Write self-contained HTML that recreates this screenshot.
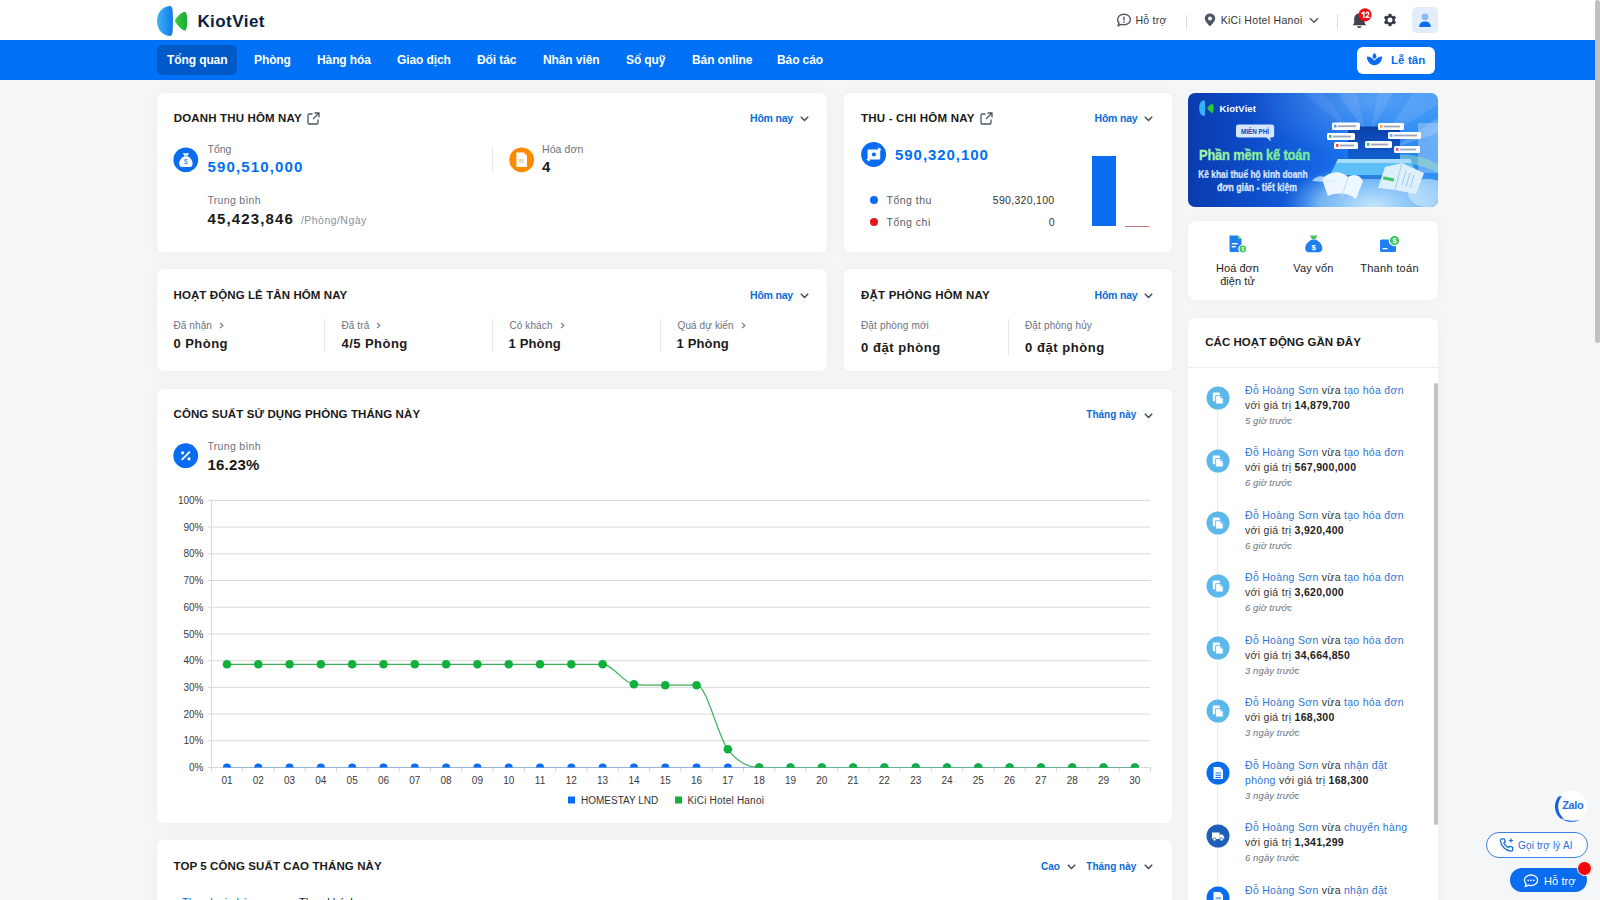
<!DOCTYPE html><html><head><meta charset="utf-8"><style>
html,body{margin:0;padding:0;}
body{width:1600px;height:900px;overflow:hidden;position:relative;background:#f5f6f7;font-family:"Liberation Sans",sans-serif;}
.t{position:absolute;white-space:nowrap;}
.b{position:absolute;}
svg.b{overflow:visible;}
</style></head><body>
<div class="b" style="left:0px;top:0px;width:1600px;height:40px;background:#fff;border-radius:0px;"></div>
<div class="b" style="left:0px;top:40px;width:1600px;height:40px;background:#0070f4;border-radius:0px;"></div>
<svg class="b" style="left:155px;top:4px" width="36" height="34" viewBox="155 4 36 34">
<defs><linearGradient id="lgb" x1="0" x2="1" y1="0" y2="0"><stop offset="0" stop-color="#3cb4f7"/><stop offset="1" stop-color="#1479ea"/></linearGradient>
<linearGradient id="lgg" x1="0" x2="1"><stop offset="0" stop-color="#3ccf3a"/><stop offset="1" stop-color="#17a83a"/></linearGradient></defs>
<path d="M169.8 6 C 171.4 5.9 172.2 7.3 172.5 9.5 C 173.1 16 173.1 26 172.5 32.5 C 172.2 34.8 171.3 36.2 169.6 36.1 C 162 35.2 157 29 157 21 C 157 13.2 162 6.8 169.8 6 Z" fill="url(#lgb)"/>
<path d="M183.5 12 C 185 11.4 186 12.3 186.5 14 C 187.6 18 187.6 24 186.5 28.5 C 186 30.3 185 31 183.5 30.3 C 180.5 28.5 177.5 25.5 175.3 21.8 C 174.8 21 174.8 20.2 175.3 19.5 C 177.5 16.2 180.3 13.6 183.5 12 Z" fill="url(#lgg)"/>
</svg>
<div class="t" style="left:197.4px;top:13.01px;font-size:17px;line-height:17px;font-weight:bold;color:#0a1e42;letter-spacing:0.45px;">KiotViet</div>
<div class="b" style="left:157px;top:45px;width:80px;height:30px;background:#0059c9;border-radius:5px;"></div>
<div class="t" style="left:167px;top:54.04px;font-size:12px;line-height:12px;font-weight:bold;color:#fff;letter-spacing:-0.1px;">Tổng quan</div>
<div class="t" style="left:254px;top:54.04px;font-size:12px;line-height:12px;font-weight:bold;color:#fff;letter-spacing:-0.1px;">Phòng</div>
<div class="t" style="left:317px;top:54.04px;font-size:12px;line-height:12px;font-weight:bold;color:#fff;letter-spacing:-0.1px;">Hàng hóa</div>
<div class="t" style="left:397px;top:54.04px;font-size:12px;line-height:12px;font-weight:bold;color:#fff;letter-spacing:-0.1px;">Giao dịch</div>
<div class="t" style="left:477px;top:54.04px;font-size:12px;line-height:12px;font-weight:bold;color:#fff;letter-spacing:-0.1px;">Đối tác</div>
<div class="t" style="left:543px;top:54.04px;font-size:12px;line-height:12px;font-weight:bold;color:#fff;letter-spacing:-0.1px;">Nhân viên</div>
<div class="t" style="left:626px;top:54.04px;font-size:12px;line-height:12px;font-weight:bold;color:#fff;letter-spacing:-0.1px;">Sổ quỹ</div>
<div class="t" style="left:692px;top:54.04px;font-size:12px;line-height:12px;font-weight:bold;color:#fff;letter-spacing:-0.1px;">Bán online</div>
<div class="t" style="left:777px;top:54.04px;font-size:12px;line-height:12px;font-weight:bold;color:#fff;letter-spacing:-0.1px;">Báo cáo</div>
<svg class="b" style="left:1116px;top:13px" width="16" height="14" viewBox="0 0 16 14">
<path d="M8 1.2 C 4.2 1.2 1.6 3.6 1.6 6.5 C 1.6 7.8 2.1 9 3 9.9 L 2 12.8 L 5.2 11.4 C 6 11.7 7 11.8 8 11.8 C 11.8 11.8 14.4 9.4 14.4 6.5 C 14.4 3.6 11.8 1.2 8 1.2 Z" fill="none" stroke="#4b5563" stroke-width="1.4" stroke-linejoin="round"/>
<rect x="7.3" y="3.6" width="1.4" height="3.8" fill="#4b5563"/><rect x="7.3" y="8.4" width="1.4" height="1.4" fill="#4b5563"/></svg>
<div class="t" style="left:1135.4px;top:14.96px;font-size:10.5px;line-height:10.5px;font-weight:normal;color:#333;letter-spacing:0.25px;">Hỗ trợ</div>
<div class="b" style="left:1186px;top:14.5px;width:1px;height:14px;background:#d9dce1;border-radius:0px;"></div>
<svg class="b" style="left:1204px;top:13px" width="12" height="14" viewBox="0 0 12 14">
<path d="M6 0.6 C 3 0.6 0.8 2.8 0.8 5.6 C 0.8 8.8 6 13.4 6 13.4 C 6 13.4 11.2 8.8 11.2 5.6 C 11.2 2.8 9 0.6 6 0.6 Z" fill="#4a5568"/><circle cx="6" cy="5.4" r="2" fill="#fff"/></svg>
<div class="t" style="left:1220.7px;top:14.96px;font-size:10.5px;line-height:10.5px;font-weight:normal;color:#333;letter-spacing:0.3px;">KiCi Hotel Hanoi</div>
<svg class="b" style="left:1309px;top:17px" width="10" height="7" viewBox="0 0 10 7"><path d="M1 1.2 L5 5.2 L9 1.2" fill="none" stroke="#4b5563" stroke-width="1.4"/></svg>
<div class="b" style="left:1337px;top:14px;width:1px;height:15px;background:#d9dce1;border-radius:0px;"></div>
<svg class="b" style="left:1351px;top:11px" width="18" height="19" viewBox="0 0 18 19">
<path d="M8 2.5 C 4.8 2.5 3.2 5 3.2 8 L 3.2 12 L 1.6 14.3 L 15.2 14.3 L 13.6 12 L 13.6 8 C 13.6 5 11.8 2.5 8 2.5 Z" fill="#3d4451"/>
<path d="M6 15.2 L 10.6 15.2 C 10.3 16.4 9.5 17 8.3 17 C 7.1 17 6.3 16.4 6 15.2 Z" fill="#3d4451"/></svg>
<svg class="b" style="left:1358px;top:7.5px" width="14" height="14" viewBox="0 0 14 14"><circle cx="7" cy="6.8" r="6.6" fill="#ee0f17"/><path d="M3.4 5.1 L5.3 3.6 L6.6 3.6 L6.6 9.9 L5.1 9.9 L5.1 5.5 L3.8 6.4 Z" fill="#fff"/><path d="M7.4 5.7 C7.4 4.4 8.3 3.5 9.5 3.5 C10.7 3.5 11.5 4.3 11.5 5.4 C11.5 6.2 11.1 6.8 10.4 7.5 L9.4 8.5 L11.6 8.5 L11.6 9.9 L7.4 9.9 L7.4 8.8 L9.5 6.7 C9.9 6.3 10 6 10 5.6 C10 5.2 9.8 4.9 9.5 4.9 C9.1 4.9 8.9 5.2 8.9 5.8 Z" fill="#fff"/></svg>
<svg class="b" style="left:1383.1px;top:12.9px" width="14" height="14" viewBox="0 0 14 14"><path d="M5.70 2.48 L5.84 1.01 L8.16 1.01 L8.30 2.48 L10.26 3.62 L11.60 3.00 L12.77 5.01 L11.56 5.86 L11.56 8.14 L12.77 8.99 L11.60 11.00 L10.26 10.38 L8.30 11.52 L8.16 12.99 L5.84 12.99 L5.70 11.52 L3.74 10.38 L2.40 11.00 L1.23 8.99 L2.44 8.14 L2.44 5.86 L1.23 5.01 L2.40 3.00 L3.74 3.62 Z" fill="#2f3540" stroke="#2f3540" stroke-width="0.5" stroke-linejoin="round"/><circle cx="7" cy="7" r="2.5" fill="#fff"/></svg>
<div class="b" style="left:1412px;top:7px;width:26px;height:26px;background:#e3eefd;border-radius:5px;"></div>
<svg class="b" style="left:1412px;top:7px" width="26" height="26" viewBox="0 0 26 26">
<circle cx="13" cy="9.8" r="3.4" fill="#8bb9f7"/><path d="M7.2 20 C 7.2 16.3 9.5 14.5 13 14.5 C 16.5 14.5 18.8 16.3 18.8 20 Z" fill="#0a6cf0"/></svg>
<div class="b" style="left:1357px;top:46.5px;width:78px;height:27px;background:#fff;border-radius:6px;"></div>
<svg class="b" style="left:1366px;top:52px" width="17" height="14" viewBox="0 0 17 14">
<path d="M8.5 0.9 C 10.1 2.3 10.7 3.7 10.3 5.1 C 10 6.1 9.3 6.7 8.5 6.9 C 7.7 6.7 7 6.1 6.7 5.1 C 6.3 3.7 6.9 2.3 8.5 0.9 Z" fill="#0a6cf0"/>
<path d="M0.8 4.6 C 4.2 4.6 7 6.4 8.5 8.7 C 10 6.4 12.8 4.6 16.2 4.6 C 16 9.6 12.7 13.2 8.5 13.2 C 4.3 13.2 1 9.6 0.8 4.6 Z" fill="#0a6cf0"/></svg>
<div class="t" style="left:1391px;top:54.92px;font-size:11.5px;line-height:11.5px;font-weight:bold;color:#0a6cf0;letter-spacing:0.1px;">Lễ tân</div>
<div class="b" style="left:1594.5px;top:0px;width:5.5px;height:343px;background:#c1c1c1;border-radius:3px;"></div>
<div class="b" style="left:157px;top:93px;width:670px;height:159px;background:#fff;border-radius:6px;box-shadow:0 0 18px rgba(20,30,50,0.035);"></div>
<div class="b" style="left:844px;top:93px;width:328px;height:159px;background:#fff;border-radius:6px;box-shadow:0 0 18px rgba(20,30,50,0.035);"></div>
<div class="b" style="left:157px;top:269px;width:670px;height:102px;background:#fff;border-radius:6px;box-shadow:0 0 18px rgba(20,30,50,0.035);"></div>
<div class="b" style="left:844px;top:269px;width:328px;height:102px;background:#fff;border-radius:6px;box-shadow:0 0 18px rgba(20,30,50,0.035);"></div>
<div class="b" style="left:157px;top:388.5px;width:1015px;height:434.5px;background:#fff;border-radius:6px;box-shadow:0 0 18px rgba(20,30,50,0.035);"></div>
<div class="b" style="left:157px;top:840px;width:1015px;height:100px;background:#fff;border-radius:6px;box-shadow:0 0 18px rgba(20,30,50,0.035);"></div>
<div class="t" style="left:173.8px;top:112.92px;font-size:11.5px;line-height:11.5px;font-weight:bold;color:#1a1a1a;letter-spacing:0.15px;">DOANH THU HÔM NAY</div>
<svg class="b" style="left:306.5px;top:111.5px" width="13" height="13" viewBox="0 0 13 13">
<path d="M5.5 2 L2.2 2 C1.5 2 1 2.5 1 3.2 L1 10.8 C1 11.5 1.5 12 2.2 12 L9.8 12 C10.5 12 11 11.5 11 10.8 L11 7.5" fill="none" stroke="#4b5563" stroke-width="1.3"/>
<path d="M7.5 1 L12 1 L12 5.5 M12 1 L6 7" fill="none" stroke="#4b5563" stroke-width="1.3"/></svg>
<div class="t" style="left:750px;top:112.96px;font-size:10.5px;line-height:10.5px;font-weight:bold;color:#0b6bd8;letter-spacing:-0.2px;">Hôm nay</div>
<svg class="b" style="left:799.5px;top:116.3px" width="9" height="6" viewBox="0 0 9 6"><path d="M0.8 0.8 L4.5 4.6 L8.2 0.8" fill="none" stroke="#3f4550" stroke-width="1.4"/></svg>
<svg class="b" style="left:173px;top:147px" width="26" height="26" viewBox="0 0 26 26">
<circle cx="12.8" cy="12.8" r="12.4" fill="#0a6cf0"/>
<path d="M9.6 6.2 L16.2 6.2 L14.4 8.8 L11.4 8.8 Z" fill="#fff"/>
<path d="M11.3 9.3 L14.5 9.3 C 17.5 10.8 19.6 13.6 19.6 16.5 C 19.6 19 18.5 19.9 16.5 19.9 L 9.3 19.9 C 7.3 19.9 6.2 19 6.2 16.5 C 6.2 13.6 8.3 10.8 11.3 9.3 Z" fill="#fff"/>
<text x="12.9" y="17.3" font-size="6.5" font-family="Liberation Sans" fill="#0a6cf0" text-anchor="middle">$</text></svg>
<div class="t" style="left:207.5px;top:143.96px;font-size:10.5px;line-height:10.5px;font-weight:normal;color:#6b7280;">Tổng</div>
<div class="t" style="left:207.5px;top:158.95px;font-size:15px;line-height:15px;font-weight:bold;color:#0070f4;letter-spacing:1.15px;">590,510,000</div>
<div class="b" style="left:491.5px;top:147px;width:1px;height:25px;background:#e5e7eb;border-radius:0px;"></div>
<svg class="b" style="left:509px;top:147px" width="26" height="26" viewBox="0 0 26 26">
<circle cx="12.7" cy="12.8" r="12.4" fill="#ff8a00"/>
<path d="M7.4 5.6 L15 5.6 L18 8.6 L18 20 L7.4 20 Z" fill="#fff"/>
<path d="M15 5.6 L15 8.6 L18 8.6" fill="#ffd9a8"/>
<rect x="10" y="12.5" width="4.6" height="1" fill="#e8a04a"/><rect x="10" y="14.6" width="4.6" height="1" fill="#e8c27a"/></svg>
<div class="t" style="left:542px;top:143.96px;font-size:10.5px;line-height:10.5px;font-weight:normal;color:#6b7280;letter-spacing:0.1px;">Hóa đơn</div>
<div class="t" style="left:542px;top:158.95px;font-size:15px;line-height:15px;font-weight:bold;color:#1a1a1a;">4</div>
<div class="t" style="left:207.5px;top:194.96px;font-size:10.5px;line-height:10.5px;font-weight:normal;color:#6b7280;letter-spacing:0.3px;">Trung bình</div>
<div class="t" style="left:207.5px;top:210.95px;font-size:15px;line-height:15px;font-weight:bold;color:#1a1a1a;letter-spacing:1.15px;">45,423,846</div>
<div class="t" style="left:301px;top:214.96px;font-size:10.5px;line-height:10.5px;font-weight:normal;color:#8b929c;letter-spacing:0.45px;">/Phòng/Ngày</div>
<div class="t" style="left:861px;top:112.92px;font-size:11.5px;line-height:11.5px;font-weight:bold;color:#1a1a1a;letter-spacing:0.2px;">THU - CHI HÔM NAY</div>
<svg class="b" style="left:980px;top:111.5px" width="13" height="13" viewBox="0 0 13 13">
<path d="M5.5 2 L2.2 2 C1.5 2 1 2.5 1 3.2 L1 10.8 C1 11.5 1.5 12 2.2 12 L9.8 12 C10.5 12 11 11.5 11 10.8 L11 7.5" fill="none" stroke="#4b5563" stroke-width="1.3"/>
<path d="M7.5 1 L12 1 L12 5.5 M12 1 L6 7" fill="none" stroke="#4b5563" stroke-width="1.3"/></svg>
<div class="t" style="left:1094.5px;top:112.96px;font-size:10.5px;line-height:10.5px;font-weight:bold;color:#0b6bd8;letter-spacing:-0.2px;">Hôm nay</div>
<svg class="b" style="left:1144px;top:116.3px" width="9" height="6" viewBox="0 0 9 6"><path d="M0.8 0.8 L4.5 4.6 L8.2 0.8" fill="none" stroke="#3f4550" stroke-width="1.4"/></svg>
<svg class="b" style="left:861px;top:142px" width="26" height="26" viewBox="0 0 26 26">
<circle cx="12.6" cy="12.5" r="12.5" fill="#0a6cf0"/>
<rect x="6.6" y="7.6" width="12.6" height="9.8" rx="0.8" fill="#fff"/>
<circle cx="12.9" cy="12.5" r="2.1" fill="#0a6cf0"/>
<path d="M17.2 5.2 L20.4 7.6 L17.2 10 Z" fill="#fff"/><path d="M8.6 15 L5.4 17.4 L8.6 19.8 Z" fill="#fff"/></svg>
<div class="t" style="left:895px;top:146.95px;font-size:15px;line-height:15px;font-weight:bold;color:#0070f4;letter-spacing:0.95px;">590,320,100</div>
<div class="b" style="left:869.5px;top:196px;width:8px;height:8px;border-radius:50%;background:#0a6cf0"></div>
<div class="b" style="left:869.5px;top:218px;width:8px;height:8px;border-radius:50%;background:#e8141c"></div>
<div class="t" style="left:886.5px;top:194.96px;font-size:10.5px;line-height:10.5px;font-weight:normal;color:#555b65;letter-spacing:0.5px;">Tổng thu</div>
<div class="t" style="left:886.5px;top:216.96px;font-size:10.5px;line-height:10.5px;font-weight:normal;color:#555b65;letter-spacing:0.5px;">Tổng chi</div>
<div class="t" style="right:545.5px;top:194.96px;font-size:10.5px;line-height:10.5px;font-weight:normal;color:#333;letter-spacing:0.3px;">590,320,100</div>
<div class="t" style="right:545.5px;top:216.96px;font-size:10.5px;line-height:10.5px;font-weight:normal;color:#333;">0</div>
<div class="b" style="left:1092px;top:156px;width:23.8px;height:70.3px;background:#0a6cf0;border-radius:0px;"></div>
<div class="b" style="left:1125px;top:225.6px;width:24px;height:1.2px;background:#c97b7b;border-radius:0px;"></div>
<div class="t" style="left:173.5px;top:289.92px;font-size:11.5px;line-height:11.5px;font-weight:bold;color:#1a1a1a;letter-spacing:0.1px;">HOẠT ĐỘNG LỄ TÂN HÔM NAY</div>
<div class="t" style="left:750px;top:289.96px;font-size:10.5px;line-height:10.5px;font-weight:bold;color:#0b6bd8;letter-spacing:-0.2px;">Hôm nay</div>
<svg class="b" style="left:799.5px;top:293px" width="9" height="6" viewBox="0 0 9 6"><path d="M0.8 0.8 L4.5 4.6 L8.2 0.8" fill="none" stroke="#3f4550" stroke-width="1.4"/></svg>
<div class="t" style="left:173.5px;top:321.04px;font-size:10px;line-height:10px;font-weight:normal;color:#6b7280;letter-spacing:0.1px;">Đã nhận</div>
<svg class="b" style="left:219.0046875px;top:322px" width="5" height="7" viewBox="0 0 5 7"><path d="M1 0.8 L3.9 3.5 L1 6.2" fill="none" stroke="#6b7280" stroke-width="1.1"/></svg>
<div class="t" style="left:173.5px;top:337.00px;font-size:13px;line-height:13px;font-weight:bold;color:#1a1a1a;letter-spacing:0.45px;">0 Phòng</div>
<div class="t" style="left:341.5px;top:321.04px;font-size:10px;line-height:10px;font-weight:normal;color:#6b7280;letter-spacing:0.1px;">Đã trả</div>
<svg class="b" style="left:376.3296875px;top:322px" width="5" height="7" viewBox="0 0 5 7"><path d="M1 0.8 L3.9 3.5 L1 6.2" fill="none" stroke="#6b7280" stroke-width="1.1"/></svg>
<div class="t" style="left:341.5px;top:337.00px;font-size:13px;line-height:13px;font-weight:bold;color:#1a1a1a;letter-spacing:0.45px;">4/5 Phòng</div>
<div class="b" style="left:323.5px;top:319px;width:1px;height:32.5px;background:#e5e7eb;border-radius:0px;"></div>
<div class="t" style="left:509.5px;top:321.04px;font-size:10px;line-height:10px;font-weight:normal;color:#6b7280;letter-spacing:0.1px;">Có khách</div>
<svg class="b" style="left:559.54375px;top:322px" width="5" height="7" viewBox="0 0 5 7"><path d="M1 0.8 L3.9 3.5 L1 6.2" fill="none" stroke="#6b7280" stroke-width="1.1"/></svg>
<div class="t" style="left:508.5px;top:337.00px;font-size:13px;line-height:13px;font-weight:bold;color:#1a1a1a;letter-spacing:0.15px;">1 Phòng</div>
<div class="b" style="left:491.5px;top:319px;width:1px;height:32.5px;background:#e5e7eb;border-radius:0px;"></div>
<div class="t" style="left:677.5px;top:321.04px;font-size:10px;line-height:10px;font-weight:normal;color:#6b7280;letter-spacing:0.1px;">Quá dự kiến</div>
<svg class="b" style="left:740.6546875px;top:322px" width="5" height="7" viewBox="0 0 5 7"><path d="M1 0.8 L3.9 3.5 L1 6.2" fill="none" stroke="#6b7280" stroke-width="1.1"/></svg>
<div class="t" style="left:676.5px;top:337.00px;font-size:13px;line-height:13px;font-weight:bold;color:#1a1a1a;letter-spacing:0.15px;">1 Phòng</div>
<div class="b" style="left:659.5px;top:319px;width:1px;height:32.5px;background:#e5e7eb;border-radius:0px;"></div>
<div class="t" style="left:861px;top:289.92px;font-size:11.5px;line-height:11.5px;font-weight:bold;color:#1a1a1a;letter-spacing:0.2px;">ĐẶT PHÒNG HÔM NAY</div>
<div class="t" style="left:1094.5px;top:289.96px;font-size:10.5px;line-height:10.5px;font-weight:bold;color:#0b6bd8;letter-spacing:-0.2px;">Hôm nay</div>
<svg class="b" style="left:1144px;top:293px" width="9" height="6" viewBox="0 0 9 6"><path d="M0.8 0.8 L4.5 4.6 L8.2 0.8" fill="none" stroke="#3f4550" stroke-width="1.4"/></svg>
<div class="t" style="left:861px;top:321.04px;font-size:10px;line-height:10px;font-weight:normal;color:#6b7280;letter-spacing:0.15px;">Đặt phòng mới</div>
<div class="t" style="left:1025px;top:321.04px;font-size:10px;line-height:10px;font-weight:normal;color:#6b7280;letter-spacing:0.15px;">Đặt phòng hủy</div>
<div class="t" style="left:861px;top:341.00px;font-size:13px;line-height:13px;font-weight:bold;color:#1a1a1a;letter-spacing:0.55px;">0 đặt phòng</div>
<div class="t" style="left:1025px;top:341.00px;font-size:13px;line-height:13px;font-weight:bold;color:#1a1a1a;letter-spacing:0.55px;">0 đặt phòng</div>
<div class="b" style="left:1007.5px;top:319px;width:1px;height:36px;background:#e5e7eb;border-radius:0px;"></div>
<div class="t" style="left:173.5px;top:408.92px;font-size:11.5px;line-height:11.5px;font-weight:bold;color:#1a1a1a;letter-spacing:0.1px;">CÔNG SUẤT SỬ DỤNG PHÒNG THÁNG NÀY</div>
<div class="t" style="left:1086.3px;top:410.04px;font-size:10px;line-height:10px;font-weight:bold;color:#0b6bd8;">Tháng này</div>
<svg class="b" style="left:1144px;top:412.5px" width="9" height="6" viewBox="0 0 9 6"><path d="M0.8 0.8 L4.5 4.6 L8.2 0.8" fill="none" stroke="#3f4550" stroke-width="1.4"/></svg>
<svg class="b" style="left:173px;top:443px" width="26" height="26" viewBox="0 0 26 26">
<circle cx="12.7" cy="12.7" r="12.4" fill="#0a6cf0"/>
<path d="M9.2 16.4 L16.4 9.2" stroke="#fff" stroke-width="1.8" stroke-linecap="round"/>
<circle cx="9.6" cy="9.8" r="1.6" fill="#fff"/><circle cx="16" cy="15.8" r="1.6" fill="#fff"/></svg>
<div class="t" style="left:207.5px;top:440.96px;font-size:10.5px;line-height:10.5px;font-weight:normal;color:#6b7280;letter-spacing:0.3px;">Trung bình</div>
<div class="t" style="left:207.5px;top:456.95px;font-size:15px;line-height:15px;font-weight:bold;color:#1a1a1a;letter-spacing:0.2px;">16.23%</div>
<svg class="b" style="left:0;top:0" width="1600" height="900" viewBox="0 0 1600 900">
<defs><clipPath id="plot"><rect x="211.3" y="490.5" width="939.2" height="277.0"/></clipPath></defs>
<line x1="207.8" y1="767.50" x2="1150.5" y2="767.50" stroke="#d9d9d9" stroke-width="1"/>
<text x="203.5" y="771.10" font-size="10" font-family="Liberation Sans" fill="#3a3a3a" text-anchor="end" letter-spacing="0">0%</text>
<line x1="207.8" y1="740.79" x2="1150.5" y2="740.79" stroke="#d9d9d9" stroke-width="1"/>
<text x="203.5" y="744.39" font-size="10" font-family="Liberation Sans" fill="#3a3a3a" text-anchor="end" letter-spacing="0">10%</text>
<line x1="207.8" y1="714.08" x2="1150.5" y2="714.08" stroke="#d9d9d9" stroke-width="1"/>
<text x="203.5" y="717.68" font-size="10" font-family="Liberation Sans" fill="#3a3a3a" text-anchor="end" letter-spacing="0">20%</text>
<line x1="207.8" y1="687.37" x2="1150.5" y2="687.37" stroke="#d9d9d9" stroke-width="1"/>
<text x="203.5" y="690.97" font-size="10" font-family="Liberation Sans" fill="#3a3a3a" text-anchor="end" letter-spacing="0">30%</text>
<line x1="207.8" y1="660.66" x2="1150.5" y2="660.66" stroke="#d9d9d9" stroke-width="1"/>
<text x="203.5" y="664.26" font-size="10" font-family="Liberation Sans" fill="#3a3a3a" text-anchor="end" letter-spacing="0">40%</text>
<line x1="207.8" y1="633.95" x2="1150.5" y2="633.95" stroke="#d9d9d9" stroke-width="1"/>
<text x="203.5" y="637.55" font-size="10" font-family="Liberation Sans" fill="#3a3a3a" text-anchor="end" letter-spacing="0">50%</text>
<line x1="207.8" y1="607.24" x2="1150.5" y2="607.24" stroke="#d9d9d9" stroke-width="1"/>
<text x="203.5" y="610.84" font-size="10" font-family="Liberation Sans" fill="#3a3a3a" text-anchor="end" letter-spacing="0">60%</text>
<line x1="207.8" y1="580.53" x2="1150.5" y2="580.53" stroke="#d9d9d9" stroke-width="1"/>
<text x="203.5" y="584.13" font-size="10" font-family="Liberation Sans" fill="#3a3a3a" text-anchor="end" letter-spacing="0">70%</text>
<line x1="207.8" y1="553.82" x2="1150.5" y2="553.82" stroke="#d9d9d9" stroke-width="1"/>
<text x="203.5" y="557.42" font-size="10" font-family="Liberation Sans" fill="#3a3a3a" text-anchor="end" letter-spacing="0">80%</text>
<line x1="207.8" y1="527.11" x2="1150.5" y2="527.11" stroke="#d9d9d9" stroke-width="1"/>
<text x="203.5" y="530.71" font-size="10" font-family="Liberation Sans" fill="#3a3a3a" text-anchor="end" letter-spacing="0">90%</text>
<line x1="207.8" y1="500.40" x2="1150.5" y2="500.40" stroke="#d9d9d9" stroke-width="1"/>
<text x="203.5" y="504.00" font-size="10" font-family="Liberation Sans" fill="#3a3a3a" text-anchor="end" letter-spacing="0">100%</text>
<line x1="211.5" y1="500.5" x2="211.5" y2="771.5" stroke="#d9d9d9" stroke-width="1"/>
<line x1="242.61" y1="767.5" x2="242.61" y2="771.5" stroke="#d4d4d4" stroke-width="1"/>
<line x1="273.91" y1="767.5" x2="273.91" y2="771.5" stroke="#d4d4d4" stroke-width="1"/>
<line x1="305.22" y1="767.5" x2="305.22" y2="771.5" stroke="#d4d4d4" stroke-width="1"/>
<line x1="336.53" y1="767.5" x2="336.53" y2="771.5" stroke="#d4d4d4" stroke-width="1"/>
<line x1="367.83" y1="767.5" x2="367.83" y2="771.5" stroke="#d4d4d4" stroke-width="1"/>
<line x1="399.14" y1="767.5" x2="399.14" y2="771.5" stroke="#d4d4d4" stroke-width="1"/>
<line x1="430.45" y1="767.5" x2="430.45" y2="771.5" stroke="#d4d4d4" stroke-width="1"/>
<line x1="461.75" y1="767.5" x2="461.75" y2="771.5" stroke="#d4d4d4" stroke-width="1"/>
<line x1="493.06" y1="767.5" x2="493.06" y2="771.5" stroke="#d4d4d4" stroke-width="1"/>
<line x1="524.37" y1="767.5" x2="524.37" y2="771.5" stroke="#d4d4d4" stroke-width="1"/>
<line x1="555.67" y1="767.5" x2="555.67" y2="771.5" stroke="#d4d4d4" stroke-width="1"/>
<line x1="586.98" y1="767.5" x2="586.98" y2="771.5" stroke="#d4d4d4" stroke-width="1"/>
<line x1="618.29" y1="767.5" x2="618.29" y2="771.5" stroke="#d4d4d4" stroke-width="1"/>
<line x1="649.59" y1="767.5" x2="649.59" y2="771.5" stroke="#d4d4d4" stroke-width="1"/>
<line x1="680.90" y1="767.5" x2="680.90" y2="771.5" stroke="#d4d4d4" stroke-width="1"/>
<line x1="712.21" y1="767.5" x2="712.21" y2="771.5" stroke="#d4d4d4" stroke-width="1"/>
<line x1="743.51" y1="767.5" x2="743.51" y2="771.5" stroke="#d4d4d4" stroke-width="1"/>
<line x1="774.82" y1="767.5" x2="774.82" y2="771.5" stroke="#d4d4d4" stroke-width="1"/>
<line x1="806.13" y1="767.5" x2="806.13" y2="771.5" stroke="#d4d4d4" stroke-width="1"/>
<line x1="837.43" y1="767.5" x2="837.43" y2="771.5" stroke="#d4d4d4" stroke-width="1"/>
<line x1="868.74" y1="767.5" x2="868.74" y2="771.5" stroke="#d4d4d4" stroke-width="1"/>
<line x1="900.05" y1="767.5" x2="900.05" y2="771.5" stroke="#d4d4d4" stroke-width="1"/>
<line x1="931.35" y1="767.5" x2="931.35" y2="771.5" stroke="#d4d4d4" stroke-width="1"/>
<line x1="962.66" y1="767.5" x2="962.66" y2="771.5" stroke="#d4d4d4" stroke-width="1"/>
<line x1="993.97" y1="767.5" x2="993.97" y2="771.5" stroke="#d4d4d4" stroke-width="1"/>
<line x1="1025.27" y1="767.5" x2="1025.27" y2="771.5" stroke="#d4d4d4" stroke-width="1"/>
<line x1="1056.58" y1="767.5" x2="1056.58" y2="771.5" stroke="#d4d4d4" stroke-width="1"/>
<line x1="1087.89" y1="767.5" x2="1087.89" y2="771.5" stroke="#d4d4d4" stroke-width="1"/>
<line x1="1119.19" y1="767.5" x2="1119.19" y2="771.5" stroke="#d4d4d4" stroke-width="1"/>
<line x1="1150.50" y1="767.5" x2="1150.50" y2="771.5" stroke="#d4d4d4" stroke-width="1"/>
<text x="226.95" y="784.2" font-size="10" font-family="Liberation Sans" fill="#3a3a3a" text-anchor="middle" letter-spacing="0">01</text>
<text x="258.26" y="784.2" font-size="10" font-family="Liberation Sans" fill="#3a3a3a" text-anchor="middle" letter-spacing="0">02</text>
<text x="289.57" y="784.2" font-size="10" font-family="Liberation Sans" fill="#3a3a3a" text-anchor="middle" letter-spacing="0">03</text>
<text x="320.87" y="784.2" font-size="10" font-family="Liberation Sans" fill="#3a3a3a" text-anchor="middle" letter-spacing="0">04</text>
<text x="352.18" y="784.2" font-size="10" font-family="Liberation Sans" fill="#3a3a3a" text-anchor="middle" letter-spacing="0">05</text>
<text x="383.49" y="784.2" font-size="10" font-family="Liberation Sans" fill="#3a3a3a" text-anchor="middle" letter-spacing="0">06</text>
<text x="414.79" y="784.2" font-size="10" font-family="Liberation Sans" fill="#3a3a3a" text-anchor="middle" letter-spacing="0">07</text>
<text x="446.10" y="784.2" font-size="10" font-family="Liberation Sans" fill="#3a3a3a" text-anchor="middle" letter-spacing="0">08</text>
<text x="477.41" y="784.2" font-size="10" font-family="Liberation Sans" fill="#3a3a3a" text-anchor="middle" letter-spacing="0">09</text>
<text x="508.71" y="784.2" font-size="10" font-family="Liberation Sans" fill="#3a3a3a" text-anchor="middle" letter-spacing="0">10</text>
<text x="540.02" y="784.2" font-size="10" font-family="Liberation Sans" fill="#3a3a3a" text-anchor="middle" letter-spacing="0">11</text>
<text x="571.33" y="784.2" font-size="10" font-family="Liberation Sans" fill="#3a3a3a" text-anchor="middle" letter-spacing="0">12</text>
<text x="602.63" y="784.2" font-size="10" font-family="Liberation Sans" fill="#3a3a3a" text-anchor="middle" letter-spacing="0">13</text>
<text x="633.94" y="784.2" font-size="10" font-family="Liberation Sans" fill="#3a3a3a" text-anchor="middle" letter-spacing="0">14</text>
<text x="665.25" y="784.2" font-size="10" font-family="Liberation Sans" fill="#3a3a3a" text-anchor="middle" letter-spacing="0">15</text>
<text x="696.55" y="784.2" font-size="10" font-family="Liberation Sans" fill="#3a3a3a" text-anchor="middle" letter-spacing="0">16</text>
<text x="727.86" y="784.2" font-size="10" font-family="Liberation Sans" fill="#3a3a3a" text-anchor="middle" letter-spacing="0">17</text>
<text x="759.17" y="784.2" font-size="10" font-family="Liberation Sans" fill="#3a3a3a" text-anchor="middle" letter-spacing="0">18</text>
<text x="790.47" y="784.2" font-size="10" font-family="Liberation Sans" fill="#3a3a3a" text-anchor="middle" letter-spacing="0">19</text>
<text x="821.78" y="784.2" font-size="10" font-family="Liberation Sans" fill="#3a3a3a" text-anchor="middle" letter-spacing="0">20</text>
<text x="853.09" y="784.2" font-size="10" font-family="Liberation Sans" fill="#3a3a3a" text-anchor="middle" letter-spacing="0">21</text>
<text x="884.39" y="784.2" font-size="10" font-family="Liberation Sans" fill="#3a3a3a" text-anchor="middle" letter-spacing="0">22</text>
<text x="915.70" y="784.2" font-size="10" font-family="Liberation Sans" fill="#3a3a3a" text-anchor="middle" letter-spacing="0">23</text>
<text x="947.01" y="784.2" font-size="10" font-family="Liberation Sans" fill="#3a3a3a" text-anchor="middle" letter-spacing="0">24</text>
<text x="978.31" y="784.2" font-size="10" font-family="Liberation Sans" fill="#3a3a3a" text-anchor="middle" letter-spacing="0">25</text>
<text x="1009.62" y="784.2" font-size="10" font-family="Liberation Sans" fill="#3a3a3a" text-anchor="middle" letter-spacing="0">26</text>
<text x="1040.93" y="784.2" font-size="10" font-family="Liberation Sans" fill="#3a3a3a" text-anchor="middle" letter-spacing="0">27</text>
<text x="1072.23" y="784.2" font-size="10" font-family="Liberation Sans" fill="#3a3a3a" text-anchor="middle" letter-spacing="0">28</text>
<text x="1103.54" y="784.2" font-size="10" font-family="Liberation Sans" fill="#3a3a3a" text-anchor="middle" letter-spacing="0">29</text>
<text x="1134.85" y="784.2" font-size="10" font-family="Liberation Sans" fill="#3a3a3a" text-anchor="middle" letter-spacing="0">30</text>
<g clip-path="url(#plot)">
<path d="M226.95 767.50 C239.48 767.50 245.74 767.50 258.26 767.50 C270.78 767.50 277.04 767.50 289.57 767.50 C302.09 767.50 308.35 767.50 320.87 767.50 C333.40 767.50 339.66 767.50 352.18 767.50 C364.70 767.50 370.96 767.50 383.49 767.50 C396.01 767.50 402.27 767.50 414.79 767.50 C427.32 767.50 433.58 767.50 446.10 767.50 C458.62 767.50 464.88 767.50 477.41 767.50 C489.93 767.50 496.19 767.50 508.71 767.50 C521.24 767.50 527.50 767.50 540.02 767.50 C552.54 767.50 558.80 767.50 571.33 767.50 C583.85 767.50 590.11 767.50 602.63 767.50 C615.16 767.50 621.42 767.50 633.94 767.50 C646.46 767.50 652.72 767.50 665.25 767.50 C677.77 767.50 684.03 767.50 696.55 767.50 C709.08 767.50 715.34 767.50 727.86 767.50 C740.38 767.50 746.64 767.50 759.17 767.50 C771.69 767.50 777.95 767.50 790.47 767.50 C803.00 767.50 809.26 767.50 821.78 767.50 C834.30 767.50 840.56 767.50 853.09 767.50 C865.61 767.50 871.87 767.50 884.39 767.50 C896.92 767.50 903.18 767.50 915.70 767.50 C928.22 767.50 934.48 767.50 947.01 767.50 C959.53 767.50 965.79 767.50 978.31 767.50 C990.84 767.50 997.10 767.50 1009.62 767.50 C1022.14 767.50 1028.40 767.50 1040.93 767.50 C1053.45 767.50 1059.71 767.50 1072.23 767.50 C1084.76 767.50 1091.02 767.50 1103.54 767.50 C1116.06 767.50 1122.32 767.50 1134.85 767.50" fill="none" stroke="#5b8fd9" stroke-width="1.2"/>
<circle cx="226.95" cy="767.50" r="4" fill="#0a6cf0"/>
<circle cx="258.26" cy="767.50" r="4" fill="#0a6cf0"/>
<circle cx="289.57" cy="767.50" r="4" fill="#0a6cf0"/>
<circle cx="320.87" cy="767.50" r="4" fill="#0a6cf0"/>
<circle cx="352.18" cy="767.50" r="4" fill="#0a6cf0"/>
<circle cx="383.49" cy="767.50" r="4" fill="#0a6cf0"/>
<circle cx="414.79" cy="767.50" r="4" fill="#0a6cf0"/>
<circle cx="446.10" cy="767.50" r="4" fill="#0a6cf0"/>
<circle cx="477.41" cy="767.50" r="4" fill="#0a6cf0"/>
<circle cx="508.71" cy="767.50" r="4" fill="#0a6cf0"/>
<circle cx="540.02" cy="767.50" r="4" fill="#0a6cf0"/>
<circle cx="571.33" cy="767.50" r="4" fill="#0a6cf0"/>
<circle cx="602.63" cy="767.50" r="4" fill="#0a6cf0"/>
<circle cx="633.94" cy="767.50" r="4" fill="#0a6cf0"/>
<circle cx="665.25" cy="767.50" r="4" fill="#0a6cf0"/>
<circle cx="696.55" cy="767.50" r="4" fill="#0a6cf0"/>
<circle cx="727.86" cy="767.50" r="4" fill="#0a6cf0"/>
<circle cx="759.17" cy="767.50" r="4" fill="#0a6cf0"/>
<circle cx="790.47" cy="767.50" r="4" fill="#0a6cf0"/>
<circle cx="821.78" cy="767.50" r="4" fill="#0a6cf0"/>
<circle cx="853.09" cy="767.50" r="4" fill="#0a6cf0"/>
<circle cx="884.39" cy="767.50" r="4" fill="#0a6cf0"/>
<circle cx="915.70" cy="767.50" r="4" fill="#0a6cf0"/>
<circle cx="947.01" cy="767.50" r="4" fill="#0a6cf0"/>
<circle cx="978.31" cy="767.50" r="4" fill="#0a6cf0"/>
<circle cx="1009.62" cy="767.50" r="4" fill="#0a6cf0"/>
<circle cx="1040.93" cy="767.50" r="4" fill="#0a6cf0"/>
<circle cx="1072.23" cy="767.50" r="4" fill="#0a6cf0"/>
<circle cx="1103.54" cy="767.50" r="4" fill="#0a6cf0"/>
<circle cx="1134.85" cy="767.50" r="4" fill="#0a6cf0"/>
<path d="M226.95 664.30 C237.39 664.30 247.82 664.30 258.26 664.30 C268.70 664.30 279.13 664.30 289.57 664.30 C300.00 664.30 310.44 664.30 320.87 664.30 C331.31 664.30 341.74 664.30 352.18 664.30 C362.62 664.30 373.05 664.30 383.49 664.30 C393.92 664.30 404.36 664.30 414.79 664.30 C425.23 664.30 435.66 664.30 446.10 664.30 C456.54 664.30 466.97 664.30 477.41 664.30 C487.84 664.30 498.28 664.30 508.71 664.30 C519.15 664.30 529.58 664.30 540.02 664.30 C550.46 664.30 560.89 664.30 571.33 664.30 C581.76 664.30 592.20 664.30 602.63 664.30 C613.07 664.30 623.50 683.40 633.94 684.30 C644.38 685.20 654.81 685.20 665.25 685.20 C675.68 685.20 686.12 685.20 696.55 685.20 C706.99 685.20 717.42 735.58 727.86 749.30 C738.30 763.02 748.73 767.50 759.17 767.50 C769.60 767.50 780.04 767.50 790.47 767.50 C800.91 767.50 811.34 767.50 821.78 767.50 C832.22 767.50 842.65 767.50 853.09 767.50 C863.52 767.50 873.96 767.50 884.39 767.50 C894.83 767.50 905.26 767.50 915.70 767.50 C926.14 767.50 936.57 767.50 947.01 767.50 C957.44 767.50 967.88 767.50 978.31 767.50 C988.75 767.50 999.18 767.50 1009.62 767.50 C1020.06 767.50 1030.49 767.50 1040.93 767.50 C1051.36 767.50 1061.80 767.50 1072.23 767.50 C1082.67 767.50 1093.10 767.50 1103.54 767.50 C1113.98 767.50 1124.41 767.50 1134.85 767.50" fill="none" stroke="#3fae5a" stroke-width="1.2"/>
<circle cx="226.95" cy="664.30" r="4.3" fill="#10b03a"/>
<circle cx="258.26" cy="664.30" r="4.3" fill="#10b03a"/>
<circle cx="289.57" cy="664.30" r="4.3" fill="#10b03a"/>
<circle cx="320.87" cy="664.30" r="4.3" fill="#10b03a"/>
<circle cx="352.18" cy="664.30" r="4.3" fill="#10b03a"/>
<circle cx="383.49" cy="664.30" r="4.3" fill="#10b03a"/>
<circle cx="414.79" cy="664.30" r="4.3" fill="#10b03a"/>
<circle cx="446.10" cy="664.30" r="4.3" fill="#10b03a"/>
<circle cx="477.41" cy="664.30" r="4.3" fill="#10b03a"/>
<circle cx="508.71" cy="664.30" r="4.3" fill="#10b03a"/>
<circle cx="540.02" cy="664.30" r="4.3" fill="#10b03a"/>
<circle cx="571.33" cy="664.30" r="4.3" fill="#10b03a"/>
<circle cx="602.63" cy="664.30" r="4.3" fill="#10b03a"/>
<circle cx="633.94" cy="684.30" r="4.3" fill="#10b03a"/>
<circle cx="665.25" cy="685.20" r="4.3" fill="#10b03a"/>
<circle cx="696.55" cy="685.20" r="4.3" fill="#10b03a"/>
<circle cx="727.86" cy="749.30" r="4.3" fill="#10b03a"/>
<circle cx="759.17" cy="767.50" r="4.3" fill="#10b03a"/>
<circle cx="790.47" cy="767.50" r="4.3" fill="#10b03a"/>
<circle cx="821.78" cy="767.50" r="4.3" fill="#10b03a"/>
<circle cx="853.09" cy="767.50" r="4.3" fill="#10b03a"/>
<circle cx="884.39" cy="767.50" r="4.3" fill="#10b03a"/>
<circle cx="915.70" cy="767.50" r="4.3" fill="#10b03a"/>
<circle cx="947.01" cy="767.50" r="4.3" fill="#10b03a"/>
<circle cx="978.31" cy="767.50" r="4.3" fill="#10b03a"/>
<circle cx="1009.62" cy="767.50" r="4.3" fill="#10b03a"/>
<circle cx="1040.93" cy="767.50" r="4.3" fill="#10b03a"/>
<circle cx="1072.23" cy="767.50" r="4.3" fill="#10b03a"/>
<circle cx="1103.54" cy="767.50" r="4.3" fill="#10b03a"/>
<circle cx="1134.85" cy="767.50" r="4.3" fill="#10b03a"/>
</g>
<rect x="568" y="796.5" width="7" height="7" fill="#0a6cf0"/>
<text x="581" y="804" font-size="10" font-family="Liberation Sans" fill="#333" letter-spacing="0">HOMESTAY LND</text>
<rect x="675" y="796.5" width="7" height="7" fill="#10b03a"/>
<text x="687.5" y="804" font-size="10" font-family="Liberation Sans" fill="#333" letter-spacing="0.2">KiCi Hotel Hanoi</text>
</svg>
<div class="t" style="left:173.5px;top:860.92px;font-size:11.5px;line-height:11.5px;font-weight:bold;color:#1a1a1a;letter-spacing:0.1px;">TOP 5 CÔNG SUẤT CAO THÁNG NÀY</div>
<div class="t" style="left:1041px;top:862.03px;font-size:10px;line-height:10px;font-weight:bold;color:#0b6bd8;">Cao</div>
<svg class="b" style="left:1067px;top:864.3px" width="9" height="6" viewBox="0 0 9 6"><path d="M0.8 0.8 L4.5 4.6 L8.2 0.8" fill="none" stroke="#3f4550" stroke-width="1.4"/></svg>
<div class="t" style="left:1086.3px;top:862.03px;font-size:10px;line-height:10px;font-weight:bold;color:#0b6bd8;">Tháng này</div>
<svg class="b" style="left:1144px;top:864.3px" width="9" height="6" viewBox="0 0 9 6"><path d="M0.8 0.8 L4.5 4.6 L8.2 0.8" fill="none" stroke="#3f4550" stroke-width="1.4"/></svg>
<div class="t" style="left:182px;top:896.99px;font-size:11px;line-height:11px;font-weight:normal;color:#0b6bd8;">Theo loại phòng</div>
<div class="t" style="left:299px;top:896.99px;font-size:11px;line-height:11px;font-weight:normal;color:#1a1a1a;">Theo khách sạn</div>
<div class="b" style="left:1188.4px;top:93px;width:250px;height:113.7px;border-radius:7px;overflow:hidden;
background:linear-gradient(90deg,#0a3cae 0%,#0d4cc8 25%,#1462e0 48%,#1d78ef 70%,#2f8ef5 100%);">
<svg width="250" height="114" viewBox="0 0 250 114" style="position:absolute;left:0;top:0">
<defs>
<radialGradient id="glow" cx="0.72" cy="0.05" r="0.5"><stop offset="0" stop-color="#bfe6ff" stop-opacity="0.35"/><stop offset="1" stop-color="#7cc4ff" stop-opacity="0"/></radialGradient>
<radialGradient id="groundR" cx="0.5" cy="0.5" r="0.5"><stop offset="0" stop-color="#c4e5fd" stop-opacity="1"/><stop offset="0.6" stop-color="#92cdf8" stop-opacity="0.75"/><stop offset="1" stop-color="#5aaaf5" stop-opacity="0"/></radialGradient><linearGradient id="ground" x1="0" y1="0" x2="0" y2="1"><stop offset="0" stop-color="#8ccaf8" stop-opacity="0"/><stop offset="0.45" stop-color="#8ccaf8" stop-opacity="0.55"/><stop offset="1" stop-color="#b6defb" stop-opacity="0.85"/></linearGradient>
<linearGradient id="gtxt" x1="0" x2="1"><stop offset="0" stop-color="#b4f5a6"/><stop offset="1" stop-color="#6fe891"/></linearGradient>
<linearGradient id="scr" x1="0" y1="0" x2="0" y2="1"><stop offset="0" stop-color="#0b3fa8"/><stop offset="1" stop-color="#1160d0"/></linearGradient>
</defs>
<rect width="250" height="114" fill="url(#glow)"/>
<path d="M150 0 L168 0 L178 40 Z" fill="#ffffff" opacity="0.09"/>
<path d="M190 0 L205 0 L182 40 Z" fill="#ffffff" opacity="0.09"/>
<path d="M225 0 L250 0 L250 12 L195 45 Z" fill="#ffffff" opacity="0.1"/>
<path d="M115 0 L135 0 L170 45 Z" fill="#ffffff" opacity="0.07"/>
<path d="M250 25 L250 40 L205 55 Z" fill="#ffffff" opacity="0.18"/>
<rect x="230" y="30" width="20" height="50" fill="#d6ecfc" opacity="0.35"/>
<ellipse cx="185" cy="112" rx="90" ry="42" fill="url(#groundR)"/><ellipse cx="240" cy="100" rx="20" ry="14" fill="#d6ecfc" opacity="0.6"/>
<path d="M205 62 C 225 60 242 66 250 72 L250 80 C 240 74 225 70 205 70 Z" fill="#a8e8b8" opacity="0.45"/>
<!-- laptop -->
<rect x="160" y="33.5" width="52" height="33" fill="url(#scr)"/>
<path d="M150 66 L222 66 L230 82 L142 82 Z" fill="#5cc0f6"/>
<path d="M150 66 L222 66 L224 70 L148 70 Z" fill="#a9dcff"/>
<path d="M142 82 L230 82 L226 86 L146 86 Z" fill="#2a7fe0"/>
<!-- books -->
<path d="M134 86 C 142 78 152 77 160 84 C 166 80 172 82 175 88 L 168 106 C 160 100 150 99 140 103 Z" fill="#eef7ff"/>
<path d="M160 84 L 154 104" stroke="#b9dcf7" stroke-width="1"/>
<path d="M197 74 L 214 70 L 236 80 L 228 101 L 207 97 L 190 95 Z" fill="#dff0fd"/>
<path d="M214 70 L 207 97" stroke="#a8d0f0" stroke-width="1"/><path d="M218 78 L 214 92 M222 80 L 218 94 M226 82 L 222 95" stroke="#9cc8ee" stroke-width="1"/>
<rect x="195" y="84" width="11" height="3" fill="#3cc466" transform="rotate(12 199 86)"/>
<path d="M124 88 C 128 82 136 82 140 86 C 144 84 148 86 148 90 Z" fill="#dcefff" opacity="0.7"/>
<!-- floating cards -->
<rect x="144" y="29.5" width="28" height="7.5" rx="1.5" fill="#fff"/>
<rect x="190" y="30" width="26" height="7" rx="1.5" fill="#fff"/>
<rect x="139" y="40" width="28" height="7" rx="1.5" fill="#fff"/>
<rect x="200" y="39" width="33" height="7" rx="1.5" fill="#fff"/>
<rect x="146" y="49" width="24" height="7" rx="1.5" fill="#fff"/>
<rect x="177" y="48" width="27" height="7" rx="1.5" fill="#fff"/>
<rect x="206" y="53" width="26" height="7" rx="1.5" fill="#fff"/>
<g fill="#9aa8bf"><rect x="150" y="32.3" width="18" height="1.8"/><rect x="196" y="32.6" width="16" height="1.8"/><rect x="145" y="42.6" width="18" height="1.8"/><rect x="206" y="41.6" width="23" height="1.8"/><rect x="152" y="51.6" width="14" height="1.8"/><rect x="183" y="50.6" width="17" height="1.8"/><rect x="212" y="55.6" width="16" height="1.8"/></g>
<rect x="146" y="31.8" width="2.5" height="2.8" fill="#5b9bf0"/><rect x="192" y="32" width="2.5" height="2.8" fill="#f5a04a"/>
<rect x="141" y="42" width="2.5" height="2.8" fill="#36c06a"/><rect x="202" y="41" width="2.5" height="2.8" fill="#6aa6f5"/>
<rect x="148" y="51" width="2.5" height="2.8" fill="#e84a4a"/><rect x="179" y="50" width="2.5" height="2.8" fill="#36c06a"/><rect x="208" y="55" width="2.5" height="2.8" fill="#d04ad0"/>
<!-- logo -->
<path d="M16.5 7.3 C 12.5 7.8 11.2 11 11.2 15.3 C 11.2 19.5 12.5 22.7 16.5 23.2 C 17.5 20 17.5 10.5 16.5 7.3 Z" fill="#3ab0f6"/>
<path d="M24.5 10.5 C 22 11.8 20 13.5 19 15.3 C 20 17.1 22 18.8 24.5 20.3 C 26.2 17.5 26.2 13.3 24.5 10.5 Z" fill="#2ec43c"/>
<text x="31.5" y="19" font-family="Liberation Sans" font-weight="bold" font-size="9.5" fill="#fff" letter-spacing="0.1">KiotViet</text>
<rect x="48" y="31.6" width="38.2" height="13" rx="2.5" fill="#d6e6ff"/>
<path d="M78 44 L83 48.5 L82 44 Z" fill="#d6e6ff"/>
<text x="67" y="41" font-family="Liberation Sans" font-weight="bold" font-size="6.3" fill="#1446b8" text-anchor="middle">MIỄN PHÍ</text>
<g transform="translate(11 66.8) scale(0.83 1)"><text x="0" y="0" font-family="Liberation Sans" font-weight="bold" font-size="15.5" fill="url(#gtxt)" letter-spacing="-0.2" stroke="#8af09a" stroke-width="0.3">Phần mềm kế toán</text></g>
<g transform="translate(10.3 85) scale(0.79 1)"><text x="0" y="0" font-family="Liberation Sans" font-weight="bold" font-size="10.6" fill="#dbe8ff" stroke="#dbe8ff" stroke-width="0.25">Kê khai thuế hộ kinh doanh</text></g>
<g transform="translate(29 98) scale(0.82 1)"><text x="0" y="0" font-family="Liberation Sans" font-weight="bold" font-size="10.6" fill="#dbe8ff" stroke="#dbe8ff" stroke-width="0.25">đơn giản - tiết kiệm</text></g>
</svg></div>
<div class="b" style="left:1188.3px;top:221px;width:249.7px;height:79.4px;background:#fff;border-radius:8px;box-shadow:0 0 18px rgba(20,30,50,0.035);"></div>
<svg class="b" style="left:1227px;top:234px" width="22" height="20" viewBox="0 0 22 20">
<path d="M2.5 1.5 L11 1.5 L14.5 5 L14.5 16.8 C14.5 17.5 14 18 13.3 18 L3.7 18 C3 18 2.5 17.5 2.5 16.8 Z" fill="#1f7ff0"/>
<path d="M11 1.5 L11 5 L14.5 5 Z" fill="#5fd67a"/>
<rect x="4.8" y="9" width="6" height="1.4" fill="#fff"/><rect x="4.8" y="12" width="4" height="1.4" fill="#fff"/>
<circle cx="15.8" cy="15" r="4" fill="#38c95a" stroke="#fff" stroke-width="1.2"/>
<text x="15.8" y="17" font-size="5" font-family="Liberation Sans" font-weight="bold" fill="#fff" text-anchor="middle">$</text></svg>
<svg class="b" style="left:1303px;top:234px" width="22" height="20" viewBox="0 0 22 20">
<path d="M7 1.5 L14.5 1.5 L12.5 5 L9 5 Z" fill="#38c95a"/>
<path d="M8.8 5.5 L12.7 5.5 C 16.5 7.3 19.3 10.8 19.3 14.3 C 19.3 17 18 18.3 15.5 18.3 L 6 18.3 C 3.5 18.3 2.2 17 2.2 14.3 C 2.2 10.8 5 7.3 8.8 5.5 Z" fill="#1f7ff0"/>
<text x="10.75" y="15.5" font-size="8" font-family="Liberation Sans" font-weight="bold" fill="#fff" text-anchor="middle">$</text></svg>
<svg class="b" style="left:1379px;top:234px" width="22" height="20" viewBox="0 0 22 20">
<rect x="1" y="5.5" width="16" height="12.5" rx="1.5" fill="#1f7ff0"/>
<rect x="3.5" y="14" width="5" height="1.3" fill="#fff"/>
<circle cx="15.5" cy="6.5" r="5.2" fill="#38c95a" stroke="#fff" stroke-width="1.2"/>
<text x="15.5" y="9.2" font-size="7.5" font-family="Liberation Sans" font-weight="bold" fill="#fff" text-anchor="middle">$</text></svg>
<div class="t" style="left:1037.5px;width:400px;text-align:center;top:262.99px;font-size:11px;line-height:11px;font-weight:normal;color:#222;letter-spacing:0.05px;">Hoá đơn</div>
<div class="t" style="left:1037.5px;width:400px;text-align:center;top:275.99px;font-size:11px;line-height:11px;font-weight:normal;color:#222;letter-spacing:0.05px;">điện tử</div>
<div class="t" style="left:1113.5px;width:400px;text-align:center;top:262.99px;font-size:11px;line-height:11px;font-weight:normal;color:#222;letter-spacing:0.2px;">Vay vốn</div>
<div class="t" style="left:1189.5px;width:400px;text-align:center;top:262.99px;font-size:11px;line-height:11px;font-weight:normal;color:#222;letter-spacing:0.3px;">Thanh toán</div>
<div class="b" style="left:1188.3px;top:317.5px;width:249.7px;height:700px;background:#fff;border-radius:8px;box-shadow:0 0 18px rgba(20,30,50,0.035);"></div>
<div class="t" style="left:1205.2px;top:336.92px;font-size:11.5px;line-height:11.5px;font-weight:bold;color:#1a1a1a;letter-spacing:0.05px;">CÁC HOẠT ĐỘNG GẦN ĐÂY</div>
<div class="b" style="left:1188.3px;top:366.7px;width:249.7px;height:1px;background:#eceef1;border-radius:0px;"></div>
<div class="b" style="left:1217.2px;top:383px;width:1px;height:520px;background:#e9ebee;border-radius:0px;"></div>
<div class="b" style="left:1433.8px;top:383px;width:4.4px;height:442px;background:#c3c3c3;border-radius:2px;"></div>
<svg class="b" style="left:1206.2px;top:386.0px" width="24" height="24" viewBox="-12 -12 24 24"><circle r="11.5" fill="#5bb8ea"/><rect x="-5.2" y="-5.6" width="7" height="8.8" rx="0.6" fill="#fff"/><path d="M-2.4 -2.4 L2.8 -2.4 L5.2 0 L5.2 6 L-2.4 6 Z" fill="#fff" stroke="#5bb8ea" stroke-width="0.9"/><path d="M2.8 -2.4 L2.8 0 L5.2 0" fill="none" stroke="#5bb8ea" stroke-width="0.8"/></svg>
<div class="t" style="left:1245px;top:384.96px;font-size:10.5px;line-height:10.5px;font-weight:normal;color:#333;letter-spacing:0.3px;"><span style="color:#2f74d6">Đỗ Hoàng Sơn</span> vừa <span style="color:#2f74d6">tạo hóa đơn</span></div>
<div class="t" style="left:1245px;top:399.96px;font-size:10.5px;line-height:10.5px;font-weight:normal;color:#333;letter-spacing:0.3px;">với giá trị <b style="color:#222">14,879,700</b></div>
<div class="t" style="left:1245px;top:415.96px;font-size:9.5px;line-height:9.5px;font-weight:normal;color:#6b7280;letter-spacing:0.1px;font-style:italic;">5 giờ trước</div>
<svg class="b" style="left:1206.2px;top:448.5px" width="24" height="24" viewBox="-12 -12 24 24"><circle r="11.5" fill="#5bb8ea"/><rect x="-5.2" y="-5.6" width="7" height="8.8" rx="0.6" fill="#fff"/><path d="M-2.4 -2.4 L2.8 -2.4 L5.2 0 L5.2 6 L-2.4 6 Z" fill="#fff" stroke="#5bb8ea" stroke-width="0.9"/><path d="M2.8 -2.4 L2.8 0 L5.2 0" fill="none" stroke="#5bb8ea" stroke-width="0.8"/></svg>
<div class="t" style="left:1245px;top:446.96px;font-size:10.5px;line-height:10.5px;font-weight:normal;color:#333;letter-spacing:0.3px;"><span style="color:#2f74d6">Đỗ Hoàng Sơn</span> vừa <span style="color:#2f74d6">tạo hóa đơn</span></div>
<div class="t" style="left:1245px;top:461.96px;font-size:10.5px;line-height:10.5px;font-weight:normal;color:#333;letter-spacing:0.3px;">với giá trị <b style="color:#222">567,900,000</b></div>
<div class="t" style="left:1245px;top:477.96px;font-size:9.5px;line-height:9.5px;font-weight:normal;color:#6b7280;letter-spacing:0.1px;font-style:italic;">6 giờ trước</div>
<svg class="b" style="left:1206.2px;top:511.0px" width="24" height="24" viewBox="-12 -12 24 24"><circle r="11.5" fill="#5bb8ea"/><rect x="-5.2" y="-5.6" width="7" height="8.8" rx="0.6" fill="#fff"/><path d="M-2.4 -2.4 L2.8 -2.4 L5.2 0 L5.2 6 L-2.4 6 Z" fill="#fff" stroke="#5bb8ea" stroke-width="0.9"/><path d="M2.8 -2.4 L2.8 0 L5.2 0" fill="none" stroke="#5bb8ea" stroke-width="0.8"/></svg>
<div class="t" style="left:1245px;top:509.96px;font-size:10.5px;line-height:10.5px;font-weight:normal;color:#333;letter-spacing:0.3px;"><span style="color:#2f74d6">Đỗ Hoàng Sơn</span> vừa <span style="color:#2f74d6">tạo hóa đơn</span></div>
<div class="t" style="left:1245px;top:524.96px;font-size:10.5px;line-height:10.5px;font-weight:normal;color:#333;letter-spacing:0.3px;">với giá trị <b style="color:#222">3,920,400</b></div>
<div class="t" style="left:1245px;top:540.96px;font-size:9.5px;line-height:9.5px;font-weight:normal;color:#6b7280;letter-spacing:0.1px;font-style:italic;">6 giờ trước</div>
<svg class="b" style="left:1206.2px;top:573.5px" width="24" height="24" viewBox="-12 -12 24 24"><circle r="11.5" fill="#5bb8ea"/><rect x="-5.2" y="-5.6" width="7" height="8.8" rx="0.6" fill="#fff"/><path d="M-2.4 -2.4 L2.8 -2.4 L5.2 0 L5.2 6 L-2.4 6 Z" fill="#fff" stroke="#5bb8ea" stroke-width="0.9"/><path d="M2.8 -2.4 L2.8 0 L5.2 0" fill="none" stroke="#5bb8ea" stroke-width="0.8"/></svg>
<div class="t" style="left:1245px;top:571.96px;font-size:10.5px;line-height:10.5px;font-weight:normal;color:#333;letter-spacing:0.3px;"><span style="color:#2f74d6">Đỗ Hoàng Sơn</span> vừa <span style="color:#2f74d6">tạo hóa đơn</span></div>
<div class="t" style="left:1245px;top:586.96px;font-size:10.5px;line-height:10.5px;font-weight:normal;color:#333;letter-spacing:0.3px;">với giá trị <b style="color:#222">3,620,000</b></div>
<div class="t" style="left:1245px;top:602.96px;font-size:9.5px;line-height:9.5px;font-weight:normal;color:#6b7280;letter-spacing:0.1px;font-style:italic;">6 giờ trước</div>
<svg class="b" style="left:1206.2px;top:636.0px" width="24" height="24" viewBox="-12 -12 24 24"><circle r="11.5" fill="#5bb8ea"/><rect x="-5.2" y="-5.6" width="7" height="8.8" rx="0.6" fill="#fff"/><path d="M-2.4 -2.4 L2.8 -2.4 L5.2 0 L5.2 6 L-2.4 6 Z" fill="#fff" stroke="#5bb8ea" stroke-width="0.9"/><path d="M2.8 -2.4 L2.8 0 L5.2 0" fill="none" stroke="#5bb8ea" stroke-width="0.8"/></svg>
<div class="t" style="left:1245px;top:634.96px;font-size:10.5px;line-height:10.5px;font-weight:normal;color:#333;letter-spacing:0.3px;"><span style="color:#2f74d6">Đỗ Hoàng Sơn</span> vừa <span style="color:#2f74d6">tạo hóa đơn</span></div>
<div class="t" style="left:1245px;top:649.96px;font-size:10.5px;line-height:10.5px;font-weight:normal;color:#333;letter-spacing:0.3px;">với giá trị <b style="color:#222">34,664,850</b></div>
<div class="t" style="left:1245px;top:665.96px;font-size:9.5px;line-height:9.5px;font-weight:normal;color:#6b7280;letter-spacing:0.1px;font-style:italic;">3 ngày trước</div>
<svg class="b" style="left:1206.2px;top:698.5px" width="24" height="24" viewBox="-12 -12 24 24"><circle r="11.5" fill="#5bb8ea"/><rect x="-5.2" y="-5.6" width="7" height="8.8" rx="0.6" fill="#fff"/><path d="M-2.4 -2.4 L2.8 -2.4 L5.2 0 L5.2 6 L-2.4 6 Z" fill="#fff" stroke="#5bb8ea" stroke-width="0.9"/><path d="M2.8 -2.4 L2.8 0 L5.2 0" fill="none" stroke="#5bb8ea" stroke-width="0.8"/></svg>
<div class="t" style="left:1245px;top:696.96px;font-size:10.5px;line-height:10.5px;font-weight:normal;color:#333;letter-spacing:0.3px;"><span style="color:#2f74d6">Đỗ Hoàng Sơn</span> vừa <span style="color:#2f74d6">tạo hóa đơn</span></div>
<div class="t" style="left:1245px;top:711.96px;font-size:10.5px;line-height:10.5px;font-weight:normal;color:#333;letter-spacing:0.3px;">với giá trị <b style="color:#222">168,300</b></div>
<div class="t" style="left:1245px;top:727.96px;font-size:9.5px;line-height:9.5px;font-weight:normal;color:#6b7280;letter-spacing:0.1px;font-style:italic;">3 ngày trước</div>
<svg class="b" style="left:1206.2px;top:761.0px" width="24" height="24" viewBox="-12 -12 24 24"><circle r="11.5" fill="#0a6cf0"/><path d="M-4.5 -6 L2 -6 L5 -3 L5 6 L-4.5 6 Z" fill="#fff"/><rect x="-2.5" y="-0.5" width="5.5" height="1" fill="#0a6cf0"/><rect x="-2.5" y="1.8" width="5.5" height="1" fill="#0a6cf0"/><rect x="-2.5" y="4" width="5.5" height="1" fill="#0a6cf0"/></svg>
<div class="t" style="left:1245px;top:759.96px;font-size:10.5px;line-height:10.5px;font-weight:normal;color:#333;letter-spacing:0.3px;"><span style="color:#2f74d6">Đỗ Hoàng Sơn</span> vừa <span style="color:#2f74d6">nhận đặt</span></div>
<div class="t" style="left:1245px;top:774.96px;font-size:10.5px;line-height:10.5px;font-weight:normal;color:#333;letter-spacing:0.3px;"><span style="color:#2f74d6">phòng</span> với giá trị <b style="color:#222">168,300</b></div>
<div class="t" style="left:1245px;top:790.96px;font-size:9.5px;line-height:9.5px;font-weight:normal;color:#6b7280;letter-spacing:0.1px;font-style:italic;">3 ngày trước</div>
<svg class="b" style="left:1206.2px;top:823.5px" width="24" height="24" viewBox="-12 -12 24 24"><circle r="11.5" fill="#1d5fb8"/><rect x="-6" y="-3.5" width="7.5" height="6.5" fill="#fff"/><path d="M1.5 -1.5 L4.5 -1.5 L6.2 1 L6.2 3 L1.5 3 Z" fill="#fff"/><circle cx="-3.5" cy="3.5" r="1.6" fill="#fff" stroke="#1d5fb8" stroke-width="0.8"/><circle cx="3.5" cy="3.5" r="1.6" fill="#fff" stroke="#1d5fb8" stroke-width="0.8"/></svg>
<div class="t" style="left:1245px;top:821.96px;font-size:10.5px;line-height:10.5px;font-weight:normal;color:#333;letter-spacing:0.3px;"><span style="color:#2f74d6">Đỗ Hoàng Sơn</span> vừa <span style="color:#2f74d6">chuyển hàng</span></div>
<div class="t" style="left:1245px;top:836.96px;font-size:10.5px;line-height:10.5px;font-weight:normal;color:#333;letter-spacing:0.3px;">với giá trị <b style="color:#222">1,341,299</b></div>
<div class="t" style="left:1245px;top:852.96px;font-size:9.5px;line-height:9.5px;font-weight:normal;color:#6b7280;letter-spacing:0.1px;font-style:italic;">6 ngày trước</div>
<svg class="b" style="left:1206.2px;top:886.0px" width="24" height="24" viewBox="-12 -12 24 24"><circle r="11.5" fill="#0a6cf0"/><path d="M-4.5 -6 L2 -6 L5 -3 L5 6 L-4.5 6 Z" fill="#fff"/><rect x="-2.5" y="-0.5" width="5.5" height="1" fill="#0a6cf0"/><rect x="-2.5" y="1.8" width="5.5" height="1" fill="#0a6cf0"/><rect x="-2.5" y="4" width="5.5" height="1" fill="#0a6cf0"/></svg>
<div class="t" style="left:1245px;top:884.96px;font-size:10.5px;line-height:10.5px;font-weight:normal;color:#333;letter-spacing:0.3px;"><span style="color:#2f74d6">Đỗ Hoàng Sơn</span> vừa <span style="color:#2f74d6">nhận đặt</span></div>
<div class="t" style="left:1245px;top:899.96px;font-size:10.5px;line-height:10.5px;font-weight:normal;color:#333;letter-spacing:0.3px;"><span style="color:#2f74d6">phòng</span> với giá trị <b style="color:#222">168,300</b></div>
<div class="t" style="left:1245px;top:915.96px;font-size:9.5px;line-height:9.5px;font-weight:normal;color:#6b7280;letter-spacing:0.1px;font-style:italic;">3 ngày trước</div>
<svg class="b" style="left:1553px;top:790px" width="36" height="34" viewBox="0 0 36 34">
<circle cx="18" cy="16.5" r="16" fill="#fff"/>
<path d="M5.74 6.22 L4.89 7.32 L4.14 8.50 L3.50 9.74 L2.96 11.03 L2.55 12.36 L2.24 13.72 L2.06 15.11 L2.00 16.50 L2.06 17.89 L2.24 19.28 L2.55 20.64 L2.96 21.97 L3.50 23.26 L4.14 24.50 L4.89 25.68 L5.74 26.78 L6.69 27.81 L7.72 28.76 L10.84 28.60 L9.83 27.67 L8.90 26.66 L8.06 25.56 L7.32 24.40 L6.68 23.18 L6.15 21.90 L5.74 20.59 L5.44 19.24 L5.26 17.88 L5.20 16.50 L5.26 15.12 L5.44 13.76 L5.74 12.41 L6.15 11.10 L6.68 9.82 L7.32 8.60 L8.06 7.44 L8.90 6.34 Z" fill="#1a5fe0"/>
<path d="M7.5 28.2 C 12 30.5 20 31.5 27.5 29.8 C 22 32.8 13 32.6 7.5 28.2 Z" fill="#1a5fe0"/>
<text x="19.8" y="19.4" font-family="Liberation Sans" font-weight="bold" font-size="11" fill="#1f6fe6" text-anchor="middle" letter-spacing="-0.35">Zalo</text></svg>
<div class="b" style="left:1485.7px;top:831.6px;width:100px;height:24.5px;border:1px solid #3b82e0;border-radius:14px;background:#fff"></div>
<svg class="b" style="left:1499px;top:837px" width="16" height="16" viewBox="0 0 16 16">
<path d="M3 1.8 L5.2 1.8 L6.3 4.8 L4.8 6 C 5.6 8 7.5 9.8 9.5 10.7 L10.7 9.2 L13.7 10.3 L13.7 12.6 C 13.7 13.6 12.9 14.3 11.9 14.2 C 6.5 13.6 2 9.1 1.4 3.7 C 1.3 2.7 2 1.8 3 1.8 Z" fill="none" stroke="#1a6fe0" stroke-width="1.3" stroke-linejoin="round"/>
<path d="M12 0.8 L12.7 2.8 L14.7 3.5 L12.7 4.2 L12 6.2 L11.3 4.2 L9.3 3.5 L11.3 2.8 Z" fill="#1a6fe0"/></svg>
<div class="t" style="left:1518px;top:841.03px;font-size:10px;line-height:10px;font-weight:normal;color:#1a6fe0;letter-spacing:0.15px;">Gọi trợ lý AI</div>
<div class="b" style="left:1510px;top:868px;width:77.3px;height:24.3px;background:#0a6cf0;border-radius:12.2px;"></div>
<svg class="b" style="left:1523px;top:874px" width="16" height="14" viewBox="0 0 16 14">
<path d="M8 1 C 4.3 1 1.4 3.4 1.4 6.3 C 1.4 7.6 2 8.8 3 9.7 L 2.2 12.6 L 5.3 11.2 C 6.1 11.5 7 11.6 8 11.6 C 11.7 11.6 14.6 9.2 14.6 6.3 C 14.6 3.4 11.7 1 8 1 Z" fill="none" stroke="#fff" stroke-width="1.3" stroke-linejoin="round"/>
<circle cx="5.2" cy="6.3" r="0.9" fill="#fff"/><circle cx="8" cy="6.3" r="0.9" fill="#fff"/><circle cx="10.8" cy="6.3" r="0.9" fill="#fff"/></svg>
<div class="t" style="left:1544px;top:875.99px;font-size:11px;line-height:11px;font-weight:normal;color:#fff;letter-spacing:0.1px;">Hỗ trợ</div>
<div class="b" style="left:1576.5px;top:860.5px;width:13px;height:13px;border-radius:50%;background:#ee0a0a;border:1.5px solid #fff;box-sizing:content-box;box-shadow:0 0 2px rgba(0,0,0,0.15)"></div>
</body></html>
